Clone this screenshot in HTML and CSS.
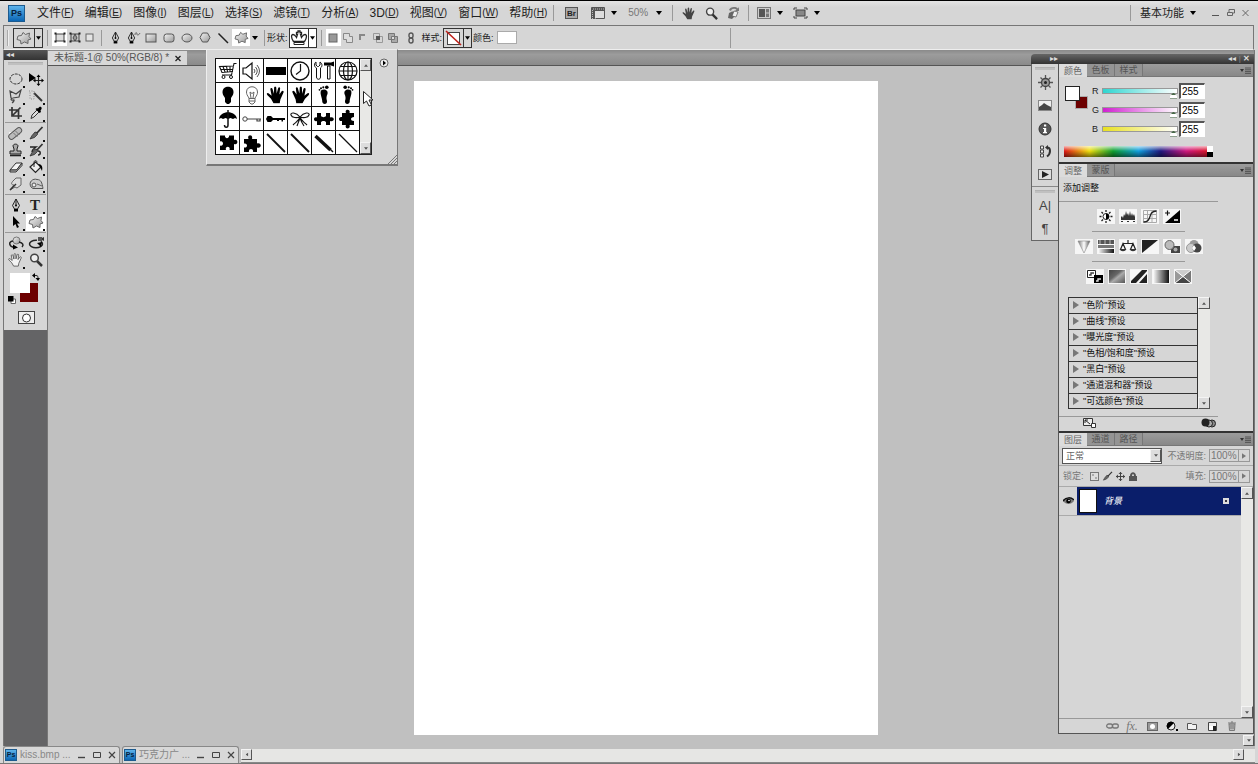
FILE: index.html
```html
<!DOCTYPE html>
<html lang="zh-CN">
<head>
<meta charset="utf-8">
<title>Photoshop</title>
<link rel="stylesheet" href="styles.css">
</head>
<body>
<svg class="defs" aria-hidden="true">
  <defs>
    <linearGradient id="gPs" x1="0" y1="0" x2="0" y2="1"><stop offset="0" stop-color="#5cb2ea"/><stop offset="1" stop-color="#0b66b4"/></linearGradient>
    <linearGradient id="gBtn" x1="0" y1="0" x2="1" y2="1"><stop offset="0" stop-color="#f4f4f4"/><stop offset="1" stop-color="#999"/></linearGradient>
    <linearGradient id="gH" x1="0" y1="0" x2="1" y2="0"><stop offset="0" stop-color="#fff"/><stop offset="1" stop-color="#111"/></linearGradient>
    <linearGradient id="gV" x1="0" y1="0" x2="1" y2="0"><stop offset="0" stop-color="#777"/><stop offset=".5" stop-color="#fff"/><stop offset="1" stop-color="#555"/></linearGradient>
    <linearGradient id="gD" x1="0" y1="0" x2="1" y2="1"><stop offset="0" stop-color="#444"/><stop offset=".4" stop-color="#666"/><stop offset=".55" stop-color="#aaa"/><stop offset="1" stop-color="#555"/></linearGradient>
  </defs>
  <symbol id="blob" viewBox="0 0 16 14"><path d="M5.500 4.500 7 1.500 9.500 3.500 13.500 2 13 5.500 15 8 12 9 12 12.500 8.500 11 5 13 4.500 9.500 1 8.500 2 5Z" fill="url(#gBtn)" stroke="#666" stroke-linejoin="round"/></symbol>
  <symbol id="down" viewBox="0 0 6 4"><path d="M0 0h6L3 4Z"/></symbol>
  <symbol id="pen" viewBox="0 0 12 14"><path d="M6 1v6M6 1 2.500 7.500 4.500 11h3L9.500 7.500Z" fill="#ccc" stroke="#222"/><circle cx="6" cy="7.500" r="1"/><path d="M4 11h4v2.500H4Z"/></symbol>
  <symbol id="hand" viewBox="0 0 16 14"><path d="M6 13.500 4 10 1 7C0 5.500 1.500 5 2.500 6L4.500 7.500 3.500 2.500C3.500 1 5 1 5.300 2.300L6.300 6 6.500 1C6.700-.2 8-.2 8.200 1L8.500 5.800 9.700 1.500C10 .3 11.500.6 11.300 1.900L10.700 6.500 12.500 4C13.400 3 14.500 3.800 14 5L11.500 10.500 11 13.500Z"/></symbol>
  <symbol id="zoom" viewBox="0 0 14 14"><path d="M8 8l5 5" stroke="#333" stroke-width="2.500"/><circle cx="5.500" cy="5" r="3.800" fill="#eee" stroke="#444" stroke-width="1.500"/></symbol>
  <symbol id="brush" viewBox="0 0 16 14"><path d="M14.500 1 8 8" stroke="#333" stroke-width="1.800"/><path d="M9 6.500 7 6 4 9.500 2 13 6.500 11.500 9.500 8.500Z" fill="#666" stroke="#222" stroke-width=".7"/></symbol>
  <symbol id="menuicon" viewBox="0 0 11 7"><path d="M0 2h4L2 5Z" fill="#333"/><path d="M5 1h6M5 2.800h6M5 4.600h6M5 6.400h6" stroke="#444" stroke-width=".8"/></symbol>
  <symbol id="puzzle" viewBox="0 0 20 20"><path d="M2 2.500h5C6.500 6 11.500 6 11 2.500h5v4.500c4.500-2 4.500 6 0 4V17h-4.500c1.500-4.500-5-4.500-3.500 0H2v-4.500c4 1.500 4-5.500 0-4Z"/></symbol>
  <symbol id="foot" viewBox="0 0 20 20"><path d="M7 5.500C10 3.500 14.500 5 13.500 9 12.500 11 12 13 13 16 13.500 19.500 9 20 8.300 17 8.500 13 5.500 9 7 5.500Z"/><circle cx="5.500" cy="4.800" r=".9"/><circle cx="7" cy="3.200" r="1"/><circle cx="9.300" cy="2.300" r="1.100"/><circle cx="12.800" cy="2.200" r="1.800"/></symbol>
  <symbol id="tri" viewBox="0 0 6 8"><path d="M0 0v8l6-4Z"/></symbol>
</svg>

<div class="app">
  <header class="menubar">
    <span class="logo">Ps</span>
    <nav class="menus">
      <button>文件<span>(<u>F</u>)</span></button><button>编辑<span>(<u>E</u>)</span></button><button>图像<span>(<u>I</u>)</span></button><button>图层<span>(<u>L</u>)</span></button><button>选择<span>(<u>S</u>)</span></button><button>滤镜<span>(<u>T</u>)</span></button><button>分析<span>(<u>A</u>)</span></button><button>3D<span>(<u>D</u>)</span></button><button>视图<span>(<u>V</u>)</span></button><button>窗口<span>(<u>W</u>)</span></button><button>帮助<span>(<u>H</u>)</span></button>
    </nav>
    <div class="appbar">
      <button class="w34" aria-label="Bridge"><svg width="13" height="12"><rect x=".5" y=".5" width="12" height="11" fill="#aaa" stroke="#555"/><text x="2" y="9" font-family="Liberation Sans" font-weight="bold" font-size="8" fill="#222">Br</text></svg></button>
      <button class="w30" aria-label="查看额外内容"><svg width="15" height="12"><path d="M1.500 11.500v-11h13v11H5.500" fill="#ddd" stroke="#555"/><path d="M1 1h13v3H5v8H1Z" fill="#555"/><path d="M3 2h11M2.500 3v9" stroke="#bbb" stroke-dasharray="1 1"/></svg><svg class="dn"><use href="#down"/></svg></button>
      <button class="zoomlevel">50% <svg class="dn"><use href="#down"/></svg></button>
      <i class="vsep"></i>
      <div class="views">
        <button class="w22" aria-label="抓手"><svg width="14" height="13" fill="#444"><use href="#hand"/></svg></button>
        <button class="w22" aria-label="缩放"><svg width="13" height="13"><use href="#zoom"/></svg></button>
        <button class="w22" aria-label="旋转视图"><svg width="14" height="14"><path d="M3 4C4 1 9 0 12 2.500L13 1v4H9l1.500-1.500C8 2 5.500 3 5 5Z" fill="#777"/><path d="M2 12 3 7 6 5.500 12 6 9 10 6 13Z" fill="#666"/><path d="M8 5l4 1-2 5-4-1Z" fill="#eee" stroke="#555" stroke-width=".7"/></svg></button>
      </div>
      <i class="vsep"></i>
      <div class="screens">
        <button class="w36" aria-label="排列文档"><svg width="14" height="12"><rect x=".5" y=".5" width="13" height="11" fill="#ccc" stroke="#777"/><path d="M2 2h6v8H2Z" fill="#555"/><path d="M9 2h3v3.500H9ZM9 6.500h3V10H9Z" fill="#777"/></svg><svg class="dn"><use href="#down"/></svg></button>
        <button class="w36" aria-label="屏幕模式"><svg width="15" height="12"><path d="M1 3V1h3M11 1h3v2M14 9v2h-3M4 11H1V9" fill="none" stroke="#444"/><rect x="3" y="3" width="9" height="6" fill="#888" stroke="#444"/></svg><svg class="dn"><use href="#down"/></svg></button>
      </div>
    </div>
    <div class="winbar">
      <button class="workspace">基本功能 <svg class="dn"><use href="#down"/></svg></button>
      <button aria-label="最小化"><svg width="8" height="8"><path d="M0 6.500h7" stroke="#555"/></svg></button>
      <button aria-label="还原"><svg width="8" height="8"><path d="M2 3V.5h5.500V4H6M.5 3.500h5v3h-5Z" fill="none" stroke="#666"/></svg></button>
      <button aria-label="关闭"><svg width="7" height="8"><path d="M.5 1l6 6M6.500 1l-6 6" stroke="#666"/></svg></button>
    </div>
  </header>

  <div class="options">
    <i class="grip"></i>
    <button class="combo preset" aria-label="工具预设"><svg width="16" height="14"><use href="#blob"/></svg><b><svg class="dn"><use href="#down"/></svg></b></button>
    <i class="vsep"></i>
    <div class="set s15">
      <button class="on" aria-label="形状图层"><svg width="12" height="11"><path d="M2 2h8v7H2Z" fill="#ddd" stroke="#444"/><path d="M.5.5h2v2h-2ZM9.500.5h2v2h-2ZM.5 8.500h2v2h-2ZM9.500 8.500h2v2h-2Z" fill="#222"/></svg></button>
      <button aria-label="路径"><svg width="12" height="11"><path d="M2 2h8v7H2Z" fill="#ccc" stroke="#444"/><path d="M.5.5h2v2h-2ZM9.500.5h2v2h-2ZM.5 8.500h2v2h-2ZM9.500 8.500h2v2h-2Z" fill="#222"/><path d="M6 2 4 6l2 3 2-3Z" fill="#999" stroke="#333" stroke-width=".8"/></svg></button>
      <button aria-label="填充像素"><svg width="9" height="9"><rect x="1" y="1" width="7" height="7" fill="#e4e4e4" stroke="#666"/></svg></button>
    </div>
    <i class="vsep"></i>
    <div class="set s18">
      <button aria-label="钢笔"><svg width="11" height="13"><use href="#pen"/></svg></button>
      <button aria-label="自由钢笔"><svg width="15" height="13"><use href="#pen" width="11" height="13"/><path d="M9 4c0-3 2-3 2-1s2 1 3-1" fill="none" stroke="#666"/></svg></button>
      <button aria-label="矩形"><svg width="12" height="10"><rect x="1" y="1" width="10" height="8" fill="url(#gBtn)" stroke="#555"/></svg></button>
      <button aria-label="圆角矩形"><svg width="12" height="10"><rect x="1" y="1" width="10" height="8" rx="2.500" fill="url(#gBtn)" stroke="#555"/></svg></button>
      <button aria-label="椭圆"><svg width="12" height="10"><ellipse cx="6" cy="5" rx="5" ry="4" fill="url(#gBtn)" stroke="#555"/></svg></button>
      <button aria-label="多边形"><svg width="12" height="11"><path d="M3.500 1h5L11 5.500 8.500 10h-5L1 5.500Z" fill="url(#gBtn)" stroke="#555"/></svg></button>
      <button aria-label="直线"><svg width="12" height="12"><path d="M1.500 1.500 11 11" stroke="#222" stroke-width="1.500"/></svg></button>
      <button class="on" aria-label="自定形状"><svg width="15" height="13"><use href="#blob"/></svg></button>
      <button class="w10" aria-label="形状选项"><svg class="dn"><use href="#down"/></svg></button>
    </div>
    <i class="vsep tight"></i>
    <span class="lbl" id="l-shape">形状:</span>
    <button class="combo white" aria-labelledby="l-shape"><svg width="18" height="17"><path d="M3.500 12.500C1 9 1 5.500 3 5.500S5.500 7 6.500 8.500L7.500 5.500 6.500 5.500V3.500h1.500V2h2v1.500h1.500v2H10.500l1 3C12.500 7 13 5.500 15 5.500S17 9 14.500 12.500Z" fill="#fff" stroke="#222" stroke-width="1.300"/><path d="M4 13.500h10v2H4Z" fill="#fff" stroke="#222"/></svg><b><svg class="dn"><use href="#down"/></svg></b></button>
    <i class="vsep"></i>
    <div class="set s15 dim">
      <button class="on" aria-label="新建形状"><svg width="10" height="10"><rect x="1" y="1" width="8" height="8" fill="#999" stroke="#666"/></svg></button>
      <button aria-label="添加"><svg width="10" height="10"><path d="M.5.5h6v3h3v6h-6v-3h-3Z" fill="#ddd" stroke="#888"/></svg></button>
      <button aria-label="减去"><svg width="10" height="10"><path d="M1 1h6v2H3v4H1Z" fill="#888"/></svg></button>
      <button aria-label="交叉"><svg width="10" height="10"><path d="M.5.5h6v6h-6ZM3.500 3.500h6v6h-6Z" fill="none" stroke="#999"/><path d="M3 3h4v4H3Z" fill="#555"/></svg></button>
      <button aria-label="重叠"><svg width="10" height="10"><path d="M.5.5h6v6h-6ZM3.500 3.500h6v6h-6Z" fill="#aaa" stroke="#777"/><path d="M4 4h2v2H4Z" fill="#ddd"/></svg></button>
    </div>
    <button class="chain" aria-label="链接"><svg width="6" height="12"><rect x="1" y="1" width="4" height="5" rx="2" fill="none" stroke="#555" stroke-width="1.400"/><rect x="1" y="6" width="4" height="5" rx="2" fill="none" stroke="#555" stroke-width="1.400"/></svg></button>
    <span class="lbl" id="l-style">样式:</span>
    <button class="combo" aria-labelledby="l-style"><svg width="19" height="18"><rect x="3.500" y="3.500" width="12" height="12" fill="#fff" stroke="#444"/><path d="M2 2l15 14" stroke="#c0201a" stroke-width="1.600"/></svg><b><svg class="dn"><use href="#down"/></svg></b></button>
    <span class="lbl" id="l-color">颜色:</span>
    <button class="colorbox" aria-labelledby="l-color"></button>
    <i class="vsep far"></i>
  </div>

  <main class="work">
    <aside class="toolbox">
      <div class="toolhead">◂◂</div>
      <div class="tools">
        <i class="hgrip"></i>
        <div class="group">
          <button class="sub" aria-label="椭圆选框"><svg><ellipse cx="8" cy="7" rx="6" ry="5" fill="none" stroke="#333" stroke-dasharray="3 1"/></svg></button>
          <button aria-label="移动"><svg><path d="M1 1v9l7-4Z"/><path d="M10.500 4v9M6 8.500h9" stroke="#222" stroke-width="1.200"/><path d="M10.500 2.500l2 2.500h-4ZM10.500 14l2-2.300h-4ZM16 8.500l-2.500-2v4ZM5 8.500l2.500-2v4Z"/></svg></button>
          <button class="sub" aria-label="套索"><svg><path d="M3 9 2 2l6 3 5-4-2 7-6 1c-3 0-2 3 0 2s1 2-1 3" fill="none" stroke="#444" stroke-width="1.200"/></svg></button>
          <button class="sub" aria-label="魔棒"><svg><path d="M6 4l8 8" stroke="#333" stroke-width="2"/><path d="M1 2h5v8H2V2" fill="none" stroke="#888" stroke-dasharray="1 1.500"/></svg></button>
          <button class="sub" aria-label="裁剪"><svg><path d="M4 1v9h10M1 4h9.500v9M12.500 1.500 5 9" fill="none" stroke="#333" stroke-width="1.700"/></svg></button>
          <button class="sub" aria-label="吸管"><svg><path d="M3 12.500 4 9l5-5 2 2-5 5Z" fill="#ddd" stroke="#333"/><path d="M7.500 3 9 2l1 .500C12-1 15.500 1.500 12.500 4.500L13 6l-1.500 1Z"/></svg></button>
        </div>
        <div class="group">
          <button class="sub" aria-label="修复画笔"><svg><path d="M1 6h5v7H1Z" fill="#f4f4f4"/><rect x="-1" y="5" width="15" height="5.500" rx="2.700" transform="rotate(-40 7 8) translate(1 0)" fill="#bbb" stroke="#555"/><path d="M5.500 7l4 4M7.500 5l4 4" stroke="#777"/></svg></button>
          <button class="sub" aria-label="画笔"><svg><use href="#brush" width="16" height="14"/></svg></button>
          <button class="sub" aria-label="图章"><svg><path d="M6 6 5 3C5 .5 10 .5 10 3L9 6v2h4v3H2V8h4Z" fill="#aaa" stroke="#222"/><path d="M2 12.500h11" stroke="#222" stroke-width="1.600"/></svg></button>
          <button class="sub" aria-label="历史画笔"><svg><use href="#brush" width="16" height="14"/><path d="M2 4h6C5 6 4 7 4 9M10 8c3 0 3 4 0 4" fill="none" stroke="#222" stroke-width="1.400"/></svg></button>
          <button class="sub" aria-label="橡皮擦"><svg><path d="M2 10 8 3h6L8.500 10Z" fill="#f4f4f4" stroke="#333"/><path d="M2 10v2h6l6-6.500V3L8.500 10Z" fill="#bbb" stroke="#333"/></svg></button>
          <button class="sub" aria-label="油漆桶"><svg><path d="M2 7 7.500 2 13 7 7.500 12.500Z" fill="#eee" stroke="#222" stroke-width="1.200"/><path d="M6 7V2.500C6 0 9 0 9 2.500" fill="none" stroke="#222"/><path d="M10 4c4 0 5 3 4 7l-2-4Z"/></svg></button>
          <button class="sub" aria-label="涂抹"><svg><path d="M2 13 6 8C3 8 3 6 5 4l3-3h5v7l-4 3-2-1Z" fill="#ddd" stroke="#666"/><path d="M2 13 8 7" stroke="#333" stroke-width="1.400"/></svg></button>
          <button class="sub" aria-label="海绵"><svg><path d="M3 10C0 5 5 1 9 2.500c4 0 5 3 6 9H5Z" fill="#ccc" stroke="#555"/><circle cx="6" cy="8" r="2" fill="#eee" stroke="#555"/><path d="M9 7l5 2" stroke="#666"/></svg></button>
        </div>
        <div class="group">
          <button class="sub" aria-label="钢笔"><svg><use href="#pen" x="2" y="0" width="12" height="14"/></svg></button>
          <button class="sub type" aria-label="文字">T</button>
          <button class="sub" aria-label="路径选择"><svg><path d="M5 1v10l2.500-2 1.500 4 2-1-2-3.500h3Z"/></svg></button>
          <button class="sub on" aria-label="自定形状"><svg><use href="#blob" width="16" height="14"/></svg></button>
        </div>
        <div class="group">
          <button class="sub" aria-label="3D旋转"><svg><circle cx="8.500" cy="4.500" r="3.500" fill="url(#gBtn)" stroke="#777"/><path d="M5 5C0 6 1 10 6 11.500M11 6c4 1 5 3 3 5" fill="none" stroke="#222" stroke-width="1.500"/><path d="M5 8.500l5 3-5 2Z"/></svg></button>
          <button class="sub" aria-label="3D环绕"><svg><ellipse cx="8" cy="8" rx="6.500" ry="3.800" fill="none" stroke="#222" stroke-width="1.500" stroke-dasharray="25 4"/><path d="M10 1h4v4h-4Z" fill="#555"/><path d="M14 2l2-1v4l-2-1Z" fill="#333"/><path d="M9 7l4 4 1-5Z"/></svg></button>
          <button class="sub" aria-label="抓手"><svg><use href="#hand" width="15" height="14" fill="#f3f3f3" stroke="#444" stroke-width=".8"/></svg></button>
          <button aria-label="缩放"><svg><use href="#zoom" x="1" width="14" height="14"/></svg></button>
        </div>
        <div class="swatches">
          <button class="bg" aria-label="背景色"></button>
          <button class="fg" aria-label="前景色"></button>
          <button class="swap" aria-label="切换颜色"><svg width="8" height="8"><path d="M1 2.500h3c2 0 2 1 2 3" fill="none" stroke="#222"/><path d="M3 0v5L0 2.500ZM3.500 5h4.500L6 8Z"/></svg></button>
          <button class="def" aria-label="默认颜色"><svg width="8" height="8"><path d="M3 3h4.500v4.500H3Z" fill="#fff" stroke="#666"/><path d="M0 0h5.500v5.500H0Z"/></svg></button>
        </div>
        <button class="mask" aria-label="快速蒙版"><svg width="11" height="10"><circle cx="5.500" cy="5" r="4" fill="#fff" stroke="#333"/></svg></button>
      </div>
    </aside>

    <section class="doc">
      <div class="tabbar"><div class="tab">未标题-1@ 50%(RGB/8) * <button aria-label="关闭文档"><svg width="6" height="7"><path d="M.5 1l5 5M5.500 1l-5 5" stroke="#222" stroke-width="1.300"/></svg></button></div></div>
      <div class="view">
        <div class="stage"><div class="paper"></div></div>
        <div class="vscroll"><button class="sb" aria-label="向下滚动"><svg class="sd"><use href="#down"/></svg></button></div>
      </div>
    </section>

    <aside class="dock">
      <div class="dockhead"><span class="d1">▸▸</span><span>◂◂ <em>|</em> <b>✕</b></span></div>
      <div class="dockbody">
        <div class="strip">
          <i class="hgrip"></i>
          <button aria-label="导航器"><svg width="15" height="15"><path d="M7.500 0v15M0 7.500h15M2.500 2.500l10 10M12.500 2.500l-10 10" stroke="#555" stroke-width="1.300"/><circle cx="7.500" cy="7.500" r="4" fill="#999" stroke="#444" stroke-width="1.300"/><circle cx="7.500" cy="7.500" r="1.500" fill="#222"/></svg></button>
          <button aria-label="直方图"><svg width="14" height="11"><rect x=".5" y=".5" width="13" height="10" fill="#eee" stroke="#888"/><path d="M1 10V7l3-2 2-2 3 2 4 2v3Z" fill="#444"/></svg></button>
          <button aria-label="信息"><svg width="14" height="14"><circle cx="7" cy="7" r="6" fill="#555" stroke="#333"/><path d="M6 2.500h2.200v2H6ZM5 6h3.200v4H9v1.200H5V10h1V7H5Z" fill="#fff"/></svg></button>
          <button aria-label="历史记录"><svg width="13" height="13"><path d="M1.500 1h3v3h-3ZM1.500 5h3v3h-3ZM1.500 9h3v3h-3Z" fill="#eee" stroke="#444"/><path d="M8 2.500c4 0 4 6 0 9" fill="none" stroke="#333" stroke-width="2"/><path d="M9 0v5L6 2.500Z" fill="#333"/></svg></button>
          <button aria-label="动作"><svg width="14" height="11"><rect x=".5" y=".5" width="13" height="10" fill="#ddd" stroke="#666"/><path d="M4 2v7l7-3.500Z" fill="#222"/></svg></button>
          <hr><i class="hgrip"></i>
          <button class="char" aria-label="字符">A|</button>
          <button class="char" aria-label="段落">¶</button>
        </div>
        <div class="panels">
          <section class="panel">
            <div class="ptabs"><button class="on">颜色</button><button>色板</button><button>样式</button><svg class="pm"><use href="#menuicon"/></svg></div>
            <div class="colorpanel">
              <div class="pair"><i class="r"></i><i class="w"></i></div>
              <div class="rgb">
                <label for="r">R</label><input type="range" id="r" class="cyan" max="255" value="255"><input type="text" value="255" aria-label="R 值">
                <label for="g">G</label><input type="range" id="g" class="mag" max="255" value="255"><input type="text" value="255" aria-label="G 值">
                <label for="b">B</label><input type="range" id="b" class="yel" max="255" value="255"><input type="text" value="255" aria-label="B 值">
              </div>
            </div>
            <div class="spectrum"><i></i></div>
          </section>

          <section class="panel">
            <div class="ptabs"><button class="on">调整</button><button>蒙版</button><svg class="pm"><use href="#menuicon"/></svg></div>
            <div class="adjust">
              <h2>添加调整</h2>
              <hr>
              <div class="arow">
                <button aria-label="亮度/对比度"><svg><circle cx="9" cy="7.500" r="3" fill="#fff" stroke="#222"/><path d="M9 4.500a3 3 0 0 1 0 6Z"/><path d="M9 1v2M9 12v2M2.500 7.500h2M13.500 7.500h2M4.500 3l1.500 1.500M12 10.500l1.500 1.500M13.500 3 12 4.500M6 10.500 4.500 12" stroke="#222" stroke-width="1.300"/></svg></button>
                <button aria-label="色阶"><svg><path d="M2 11V8l1-1 1 2 1-4 1 2 1-5 1 4 1-2 1 3 1-5 1 5 1-3 1 3 1-2 1 3v3Z" fill="#333"/><path d="M2 12.500h14" stroke="#333" stroke-dasharray="2 4"/></svg></button>
                <button aria-label="曲线"><svg><path d="M2.500 1.500h13v12h-13ZM6.500 1v12M11 1v12M2 5.500h13M2 9.500h13" fill="none" stroke="#aaa"/><path d="M2.500 13C12 13 6 2 15.500 2" fill="none" stroke="#222" stroke-width="1.300"/></svg></button>
                <button aria-label="曝光度"><svg><path d="M17 1v13H2Z"/><path d="M2 4h5M4.500 1.500v5" stroke="#111" stroke-width="1.200"/><path d="M11 11h4" stroke="#fff" stroke-width="1.500"/></svg></button>
              </div>
              <hr class="short">
              <div class="arow">
                <button aria-label="自然饱和度"><svg><path d="M3 2h12L9 14Z" fill="url(#gV)" stroke="#888" stroke-width=".6"/></svg></button>
                <button aria-label="色相/饱和度"><svg><path d="M1 1h16v4H1Z" fill="#555"/><path d="M3 1v4M8 1v4M13 1v4" stroke="#888" stroke-width="2"/><path d="M1 6h16v3H1Z" fill="#777"/><path d="M1 10h16v4H1Z" fill="url(#gH)"/></svg></button>
                <button aria-label="色彩平衡"><svg><path d="M9 1v4M4 4.500h10M4 4.500l-2.500 6h5ZM14 4.500l-2.500 6h5Z" fill="none" stroke="#222" stroke-width="1.200"/><path d="M1 10h6c0 3-6 3-6 0ZM11 10h6c0 3-6 3-6 0Z" fill="#333"/></svg></button>
                <button aria-label="黑白"><svg><path d="M1 1h16L1 14Z" fill="#222"/></svg></button>
                <button aria-label="照片滤镜"><svg><path d="M8 7h9v7H8Z" fill="#444"/><circle cx="12.500" cy="10.500" r="2" fill="#aaa"/><circle cx="6.500" cy="6" r="4.500" fill="#bbb" stroke="#666"/></svg></button>
                <button aria-label="通道混合器"><svg><circle cx="9" cy="5.500" r="4.500" fill="#999"/><circle cx="6" cy="9" r="4.500" fill="#ccc" stroke="#999"/><circle cx="12" cy="9" r="4.500" fill="#444"/><path d="M9 6l2 3-2 3-2-3Z" fill="#fff"/></svg></button>
              </div>
              <hr class="short">
              <div class="arow">
                <button aria-label="反相"><svg><path d="M1.500 1.500h8v7h-8Z" fill="#fff" stroke="#222"/><path d="M8 6h9v8H8Z"/><path d="M3 6h2V4h3" fill="none" stroke="#444" stroke-width="1.400"/><path d="M10 12h2v-2h3" fill="none" stroke="#ddd" stroke-width="1.400"/></svg></button>
                <button aria-label="色调分离"><svg><path d="M1 1h16v13H1Z" fill="url(#gD)"/></svg></button>
                <button aria-label="阈值"><svg><path d="M1 14V12L12 1h5v1L6 14ZM9 14 17 5v9Z" fill="#222"/></svg></button>
                <button aria-label="渐变映射"><svg><path d="M1 1h16v13H1Z" fill="url(#gH)"/></svg></button>
                <button aria-label="可选颜色"><svg><path d="M1 1h16v13H1Z" fill="#ccc"/><path d="M1 1l8 6.500L1 14Z" fill="#999"/><path d="M17 1 9 7.500 17 14Z" fill="#777"/><path d="M1 14l8-6.500 8 6.500Z" fill="#444"/><path d="M1 1l16 13M17 1 1 14" stroke="#fff"/></svg></button>
              </div>
              <div class="presets">
                <ul>
                  <li><button><svg><use href="#tri"/></svg>"色阶"预设</button></li>
                  <li><button><svg><use href="#tri"/></svg>"曲线"预设</button></li>
                  <li><button><svg><use href="#tri"/></svg>"曝光度"预设</button></li>
                  <li><button><svg><use href="#tri"/></svg>"色相/饱和度"预设</button></li>
                  <li><button><svg><use href="#tri"/></svg>"黑白"预设</button></li>
                  <li><button><svg><use href="#tri"/></svg>"通道混和器"预设</button></li>
                  <li><button><svg><use href="#tri"/></svg>"可选颜色"预设</button></li>
                </ul>
                <div class="scroll"><button class="sb" aria-label="向上"><svg class="sd up"><use href="#down"/></svg></button><button class="sb" aria-label="向下"><svg class="sd"><use href="#down"/></svg></button></div>
              </div>
              <hr>
              <div class="afoot">
                <button aria-label="展开视图"><svg width="13" height="10"><path d="M.5.500h9v7h-9Z" fill="#eee" stroke="#333"/><path d="M2 2l5 4M2 2h3M2 2v3" stroke="#222"/><path d="M8.500 5.500h4v4h-4Z" fill="#fff" stroke="#333"/></svg></button>
                <button aria-label="剪切到图层"><svg width="15" height="10"><circle cx="11" cy="5.500" r="3.500" fill="#888" stroke="#222"/><circle cx="8" cy="5.500" r="3.500" fill="#aaa" stroke="#222"/><circle cx="4.500" cy="4.500" r="4" fill="#222"/></svg></button>
              </div>
            </div>
          </section>

          <section class="panel layers">
            <div class="ptabs"><button class="on">图层</button><button>通道</button><button>路径</button><svg class="pm"><use href="#menuicon"/></svg></div>
            <div class="lrow">
              <div class="selwrap"><select aria-label="混合模式"><option>正常</option></select><span class="sb"><svg class="sd"><use href="#down"/></svg></span></div>
              <label for="op">不透明度:</label><div class="num"><input id="op" type="text" value="100%"><button aria-label="调整不透明度"><svg width="4" height="6"><use href="#tri"/></svg></button></div>
            </div>
            <div class="lrow second">
              <span class="lock">锁定:</span>
              <button class="w13" aria-label="锁定透明"><svg width="9" height="9"><rect x=".5" y=".5" width="8" height="8" fill="#ddd" stroke="#777"/><path d="M2 2h2v2H2ZM5 5h2v2H5Z" fill="#aaa"/></svg></button>
              <button class="w13" aria-label="锁定像素"><svg width="11" height="10"><use href="#brush"/></svg></button>
              <button class="w13" aria-label="锁定位置"><svg width="9" height="9"><path d="M4.500 0v9M0 4.500h9" stroke="#444"/><path d="M4.500 0l2 2h-4ZM4.500 9l2-2h-4ZM0 4.500l2-2v4ZM9 4.500l-2-2v4Z" fill="#444"/></svg></button>
              <button class="w13" aria-label="锁定全部"><svg width="8" height="9"><path d="M0 9V4h1C1-1 7-1 7 4h1v5Z" fill="#555"/><path d="M3 4V3c0-1 2-1 2 0v1Z" fill="#ccc"/></svg></button>
              <label class="push" for="fill">填充:</label><div class="num"><input id="fill" type="text" value="100%"><button aria-label="调整填充"><svg width="4" height="6"><use href="#tri"/></svg></button></div>
            </div>
            <div class="llist">
              <div class="items">
                <div class="layer"><button class="eye" aria-label="可见性"><svg width="11" height="8"><path d="M0 4C3 0 8 0 11 4 8 8 3 8 0 4Z" fill="#777"/><path d="M0 4C3 0 8 0 11 3" fill="none" stroke="#111" stroke-width="1.500"/><circle cx="5.500" cy="4" r="2.300"/><circle cx="6" cy="3.500" r=".8" fill="#fff"/></svg></button><div class="name"><i class="thumb"></i><span>背景</span><svg width="6" height="6"><path d="M0 0h6v6H0Z" fill="#ddd"/><path d="M2 2h2v2H2Z" fill="#334"/></svg></div></div>
              </div>
              <div class="scroll"><button class="sb" aria-label="向上"><svg class="sd up"><use href="#down"/></svg></button><button class="sb" aria-label="向下"><svg class="sd"><use href="#down"/></svg></button></div>
            </div>
            <div class="lfoot">
              <button aria-label="链接图层"><svg width="13" height="6"><rect x=".7" y="1" width="6" height="4" rx="2" fill="none" stroke="#777" stroke-width="1.300"/><rect x="6.300" y="1" width="6" height="4" rx="2" fill="none" stroke="#777" stroke-width="1.300"/></svg></button>
              <button class="fx" aria-label="图层样式">fx.</button>
              <button aria-label="添加蒙版"><svg width="11" height="9"><rect x=".5" y=".5" width="10" height="8" fill="#999" stroke="#666"/><circle cx="5.500" cy="4.500" r="2.500" fill="#fff"/></svg></button>
              <button aria-label="调整图层"><svg width="12" height="10"><circle cx="5" cy="5" r="4" fill="#eee" stroke="#222"/><path d="M2 8A4 4 0 0 1 8 2Z"/><path d="M10 8h2v2h-2Z"/></svg></button>
              <button aria-label="新建组"><svg width="10" height="8"><path d="M.5 1.500h4l1 1h4v5h-9Z" fill="#f2f2f2" stroke="#555"/></svg></button>
              <button aria-label="新建图层"><svg width="9" height="9"><path d="M.5.500h8v8h-8Z" fill="#eee" stroke="#444"/><path d="M1 4h4v4H1Z" fill="#fff"/><path d="M5 4h3v5H5Z" fill="#222"/></svg></button>
              <button aria-label="删除图层"><svg width="8" height="10"><path d="M1 3h6l-.5 6.500h-5ZM0 2h8M3 1h2" fill="#bbb" stroke="#777"/><path d="M3 4v4M5 4v4" stroke="#777"/></svg></button>
            </div>
          </section>
        </div>
      </div>
    </aside>

    <div class="picker">
      <div class="shapes">
        <button aria-label="购物车"><svg viewBox="0 0 20 20"><path d="M18.500 2.500H16L13.500 14H4M16 5 1.500 5.500 4 11.500l11-1M5 5.500l2 5.500M8.500 5.500l1 5M12 5v5.500M2.500 8.500H15" fill="none" stroke="#111" stroke-width="1.100"/><circle cx="5.500" cy="16" r="1.500" fill="#fff" stroke="#111"/><circle cx="13" cy="16" r="1.500" fill="#fff" stroke="#111"/></svg></button>
        <button aria-label="扬声器"><svg viewBox="0 0 20 20"><path d="M1 7h3l6-5v16l-6-5H1Z" fill="#fff" stroke="#111" stroke-width="1.200"/><path d="M12 8q2 2 0 4M13.500 6q3.500 4 0 8M15 4q5 6 0 12" fill="none" stroke="#555"/></svg></button>
        <button aria-label="矩形"><svg viewBox="0 0 20 20"><path d="M0 6h20v8H0Z"/></svg></button>
        <button aria-label="时钟"><svg viewBox="0 0 20 20"><circle cx="10" cy="10" r="9" fill="#fff" stroke="#111" stroke-width="1.400"/><path d="M10.500 3v7L6 13.500" fill="none" stroke="#111" stroke-width="1.200"/></svg></button>
        <button aria-label="工具"><svg viewBox="0 0 20 20"><path d="M2 1v3l1.500 1.500h1L6 4V1c3 2 2 5 .5 6v9c0 3-4 3-4 0V7C0 6 0 2 2 1Z" fill="#fff" stroke="#111"/><path d="M10 1.500h7l3-1v5l-3-1h-7Z"/><path d="M13.500 5h2.500v13h-2.500Z" fill="#fff" stroke="#111"/></svg></button>
        <button aria-label="地球"><svg viewBox="0 0 20 20"><g fill="none" stroke="#111" stroke-width="1.200"><circle cx="10" cy="10" r="9"/><ellipse cx="10" cy="10" rx="4.500" ry="9"/><path d="M10 1v18M1 10h18M2.500 5.500h15M2.500 14.500h15"/></g></svg></button>
        <button aria-label="实心灯泡"><svg viewBox="0 0 20 20"><path d="M7 13C5 10 4.500 9 4.500 7c0-7 11-7 11 0 0 2-.500 3-2.500 6Z"/><path d="M7 13h6v4l-2 2H9l-2-2Z"/></svg></button>
        <button aria-label="灯泡"><svg viewBox="0 0 20 20"><path d="M7 13C5 10 4.500 9 4.500 7c0-7 11-7 11 0 0 2-.500 3-2.500 6v4l-2 2H9l-2-2ZM7 13.500h6M7 16h6M9 13 8 7l2 1.500L12 7l-1 6" fill="none" stroke="#666"/></svg></button>
        <button aria-label="左手"><svg viewBox="0 0 16 14"><use href="#hand"/></svg></button>
        <button aria-label="右手"><svg viewBox="0 0 16 14"><use href="#hand" transform="matrix(-1 0 0 1 16 0)"/></svg></button>
        <button aria-label="左脚"><svg viewBox="0 0 20 20"><use href="#foot"/></svg></button>
        <button aria-label="右脚"><svg viewBox="0 0 20 20"><use href="#foot" transform="matrix(-1 0 0 1 20 0)"/></svg></button>
        <button aria-label="雨伞"><svg viewBox="0 0 20 20"><path d="M1 10C2 1 18 1 19 10l-2-1-2 1-2.500-1-2.500 1-2.500-1L5 10 3 9Z"/><path d="M10 1v15c0 3-3.500 3-3.500 0" fill="none" stroke="#111" stroke-width="1.500"/></svg></button>
        <button aria-label="空心钥匙"><svg viewBox="0 0 20 20"><circle cx="3" cy="10" r="2.200" fill="none" stroke="#444"/><path d="M5 10h14M15 10v2h3v-2" fill="none" stroke="#444" stroke-width="1.200"/></svg></button>
        <button aria-label="钥匙"><svg viewBox="0 0 20 20"><path d="M0 10 1.500 7h3.500l2 2h12v2h-2v1.500h-1.500V11H13v1h-2v-1H7l-2 2H1.500Z"/></svg></button>
        <button aria-label="蝴蝶结"><svg viewBox="0 0 20 20"><path d="M10 8C6 3 0 3 1 6s6 3 9 2c4-5 10-5 9-2s-6 3-9 2C9 12 6 13 3 16M10 8c1 4 4 5 7 8M10 9c-1 3-2 5-3 8M10 9c1 3 2 5 4 8" fill="none" stroke="#111" stroke-width="1.100"/></svg></button>
        <button aria-label="拼图 1"><svg viewBox="0 0 20 20"><path d="M3 4h4v3c1 1.500 4 1.500 5 0V4h4v4.500c5-1.500 5 5 0 3.500V16h-4v-3c-1-1.500-4-1.500-5 0v3H3v-4c-4 1.500-4-5 0-3.500Z"/></svg></button>
        <button aria-label="拼图 2"><svg viewBox="0 0 20 20"><path d="M4 4h4c-2-4.500 5-4.500 3.500 0H16v4c-4 0-4 4 0 4v4h-4.500c1.500 4.500-5.500 4.500-3.500 0H4v-4c-4 1-4-5 0-4Z"/></svg></button>
        <button aria-label="拼图 3"><svg viewBox="0 0 20 20"><use href="#puzzle"/></svg></button>
        <button aria-label="拼图 4"><svg viewBox="0 0 20 20"><path d="M2 6h4.500c-2-5 5-5 3.500 0H15v4.500c5-1.500 5 5.500 0 4V19h-4c1-4-5-4-4 0H2v-4.500c4 1 4-5 0-4Z"/></svg></button>
        <button aria-label="线条 1"><svg viewBox="0 0 20 20"><path d="M1 1l18 18" stroke="#111" stroke-width="1.800"/></svg></button>
        <button aria-label="线条 2"><svg viewBox="0 0 20 20"><path d="M1 1l18 18" stroke="#111" stroke-width="2"/></svg></button>
        <button aria-label="线条 3"><svg viewBox="0 0 20 20"><path d="M1.500 3l15 14" stroke="#111" stroke-width="3.500"/><path d="M15 15l4 4" stroke="#111" stroke-width="1.500"/></svg></button>
        <button aria-label="线条 4"><svg viewBox="0 0 20 20"><path d="M1 1l18 18" stroke="#111" stroke-width="1.200"/></svg></button>
      </div>
      <div class="scroll"><button class="sb" aria-label="向上"><svg class="sd up"><use href="#down"/></svg></button><button class="sb" aria-label="向下"><svg class="sd"><use href="#down"/></svg></button></div>
      <button class="flyout" aria-label="选择器菜单"><svg width="10" height="10"><circle cx="5" cy="5" r="4" fill="#eee" stroke="#666"/><path d="M4 2.500v5L7 5Z"/></svg></button>
      <svg class="corner" width="9" height="9"><path d="M0 9 9 0M3 9 9 3M6 9l3-3" stroke="#777"/></svg>
      <svg class="cursor" width="11" height="16"><path d="M.500.500v12l3-2.500 2.500 5 2.500-1-2.500-5h4Z" fill="#fff" stroke="#222"/></svg>
    </div>
  </main>

  <footer class="bottom">
    <div class="mini"><span class="logo small">Ps</span><span class="title">kiss.bmp ...</span><button aria-label="最小化"><svg width="8" height="8"><path d="M0 6.500h7" stroke="#444" stroke-width="1.400"/></svg></button><button aria-label="最大化"><svg width="8" height="8"><path d="M.5 1.500h7v5h-7Z" fill="none" stroke="#444"/></svg></button><button aria-label="关闭"><svg width="8" height="8"><path d="M1 1l6 6M7 1 1 7" stroke="#444" stroke-width="1.200"/></svg></button></div>
    <div class="mini"><span class="logo small">Ps</span><span class="title">巧克力广 ...</span><button aria-label="最小化"><svg width="8" height="8"><path d="M0 6.500h7" stroke="#444" stroke-width="1.400"/></svg></button><button aria-label="最大化"><svg width="8" height="8"><path d="M.5 1.500h7v5h-7Z" fill="none" stroke="#444"/></svg></button><button aria-label="关闭"><svg width="8" height="8"><path d="M1 1l6 6M7 1 1 7" stroke="#444" stroke-width="1.200"/></svg></button></div>
    <div class="hscroll"><button class="sb" aria-label="向左"><svg class="sd left"><use href="#down"/></svg></button><button class="sb" aria-label="向右"><svg class="sd right"><use href="#down"/></svg></button></div>
  </footer>
</div>
</body>
</html>
```

FILE: styles.css
```css
* { box-sizing: border-box; }
body {
  margin: 0;
  background: #d6d6d6;
  color: #222;
  font: 9px/12px "Liberation Sans", "Noto Sans CJK SC", sans-serif;
}
button {
  margin: 0; padding: 0; border: 0; background: none;
  color: inherit; font: inherit; white-space: nowrap;
  display: flex; align-items: center; justify-content: center; flex: none;
}
svg { display: block; flex: none; }
i { display: block; }
.defs { position: absolute; width: 0; height: 0; }
.dn { width: 6px; height: 4px; }

.app {
  display: flex; flex-direction: column; height: 100vh;
  border-top: 1px solid #000; border-bottom: 1px solid #777;
}
.vsep { width: 1px; height: 16px; background: #999; flex: none; }

/* menu bar */
.menubar { display: flex; align-items: center; height: 24px; padding-left: 8px; background: linear-gradient(#e4e4e4, #d6d6d6 6px); }
.logo {
  flex: none; width: 17px; height: 17px; text-align: center;
  font-weight: bold; font-size: 9px; line-height: 15px; color: #06213c;
  background: linear-gradient(#5cb2ea, #0b66b4); border: 1px solid #1c5a8e;
}
.logo.small { width: 12px; height: 12px; font-size: 7px; line-height: 10px; }
.menus { display: flex; gap: 11px; margin-left: 12px; font-size: 12px; line-height: 16px; }
.menus span { font-size: 10px; }
.appbar { display: flex; align-items: center; margin-left: 6px; border-left: 1px solid #999; height: 16px; font-size: 10px; }
.w36 { width: 36px; gap: 6px; }
.w34 { width: 34px; }
.w30 { width: 30px; gap: 6px; }
.w22 { width: 22px; }
.zoomlevel { width: 54px; gap: 8px; color: #777; }
.views { display: flex; padding: 0 4px 0 5px; }
.screens { display: flex; padding-left: 3px; }
.winbar { display: flex; align-items: center; gap: 7px; margin-left: auto; padding-right: 9px; border-left: 1px solid #999; height: 16px; }
.workspace { font-size: 11px; gap: 6px; padding: 0 9px; }

/* options bar */
.options {
  display: flex; align-items: center; height: 25px; margin: 0 4px 0 3px;
  border: 1px solid #777; border-bottom-color: #eee;
}
.grip { width: 2px; height: 16px; border-left: 1px solid #aaa; border-right: 1px solid #eee; margin: 0 4px 0 3px; }
.combo { height: 20px; border: 1px solid #333; }
.combo b { display: flex; align-items: center; height: 18px; padding: 0 1px; border-left: 1px solid #333; }
.combo .dn { width: 5px; }
.combo.white { background: #fff; }
.preset > svg { margin: 0 2px; }
.options .vsep { margin: 0 4px; }
.options .vsep.tight { margin-right: 1px; }
.options .vsep.far { margin-left: 213px; height: 20px; }
.set { display: flex; }
.set button { height: 17px; }
.s15 button { width: 15px; }
.s18 button { width: 18px; }
.s18 .w10 { width: 10px; }
.set .on { background: #fff; }
.lbl { margin: 0 1px; }
.chain { width: 20px; }
.colorbox { width: 20px; height: 13px; margin-left: 2px; background: #fff; border: 1px solid #aaa; }

/* work area */
.work {
  position: relative; flex: 1; min-height: 0; margin: 0 3px;
  display: grid; grid-template-columns: 45px 1fr; grid-template-rows: minmax(0, 1fr);
  border-right: 1px solid #777;
}
.toolbox { grid-area: 1 / 1; background: #646466; border: solid #777; border-width: 0 1px; }
.toolhead { height: 10px; background: linear-gradient(#555, #333); color: #ddd; font-size: 8px; line-height: 9px; padding-left: 2px; }
.tools { background: #d6d6d6; padding: 2px 1px 6px; display: flow-root; }
.hgrip { height: 3px; margin: 0 3px; background: #c0c0c0; border-top: 1px solid #b2b2b2; }
.group { display: grid; grid-template-columns: 20px 20px; grid-auto-rows: 17px; padding: 2px 0 1px 1px; border-top: 1px solid #999; }
.hgrip + .group { border-top: 0; padding: 6px 0 0 1px; }
.group button { position: relative; justify-content: flex-start; padding-left: 2px; }
.group svg { width: 17px; height: 15px; }
.group .sub::after { content: ""; position: absolute; right: 1px; bottom: 0; border: 1px solid #111; }
.group .on { background: #fff; }
.group .type { font: bold 15px/17px "Liberation Serif", serif; padding-left: 4px; }
.swatches { position: relative; height: 35px; margin-top: 3px; }
.swatches button { position: absolute; }
.fg { left: 5px; top: 0; width: 20px; height: 20px; background: #fff; }
.bg { left: 15px; top: 10px; width: 18px; height: 19px; background: #6c0000; }
.swap { left: 27px; top: 0; }
.def { left: 3px; top: 23px; }
.mask { width: 17px; height: 13px; margin: 3px 0 0 13px; background: #eee; border: 1px solid #444; }

/* document */
.doc { grid-area: 1 / 2; display: flex; flex-direction: column; min-width: 0; }
.tabbar { height: 16px; padding-top: 1px; background: linear-gradient(#8a8a8a, #9c9c9c 30%, #8a8a8a); border-bottom: 1px solid #555; }
.tab { display: flex; align-items: center; width: fit-content; height: 14px; padding: 0 6px; background: #d8d8d8; font-size: 10px; color: #555; white-space: pre; }
.tab button { margin-left: 3px; }
.view { flex: 1; display: flex; min-height: 0; background: #c0c0c0; }
.stage { flex: 1; display: flex; justify-content: center; padding: 15px 0 11px; min-height: 0; }
.paper { height: 100%; aspect-ratio: 464 / 654; background: #fff; }
.vscroll { width: 11px; display: flex; align-items: flex-end; }
.sb { width: 11px; height: 11px; background: #ddd; border: 1px solid #f4f4f4; border-right-color: #555; border-bottom-color: #555; display: flex; align-items: center; justify-content: center; flex: none; }
.sd { width: 4px; height: 3px; fill: #555; }
.up { transform: rotate(180deg); }
.left { transform: rotate(90deg); }
.right { transform: rotate(-90deg); }
.scroll { width: 12px; display: flex; flex-direction: column; justify-content: space-between; background: #e8e8e6; }
.scroll .sb { width: 12px; height: 12px; }

/* shape picker */
.picker {
  position: absolute; left: 203px; top: -1px; display: flex; align-items: flex-start;
  padding: 8px 8px 9px; background: #d6d6d6;
  border: 1px solid #eee; border-right-color: #777; border-bottom: 2px solid #777;
}
.shapes { display: grid; grid-template-columns: repeat(6, 24px); grid-auto-rows: 24px; border: solid #111; border-width: 1px 0 0 1px; background: #fff; }
.shapes button { border: solid #111; border-width: 0 1px 1px 0; }
.shapes svg { width: 20px; height: 20px; }
.picker .scroll { align-self: stretch; border: 1px solid #222; border-left: 0; }
.picker .scroll .sb { width: 11px; }
.flyout { margin-left: 7px; }
.corner { position: absolute; right: 0; bottom: 0; }
.cursor { position: absolute; left: 156px; top: 41px; }

/* dock */
.dock { grid-area: 1 / 2; justify-self: end; display: flex; flex-direction: column; width: 223px; margin: 4px 0 12px; position: relative; }
.dockhead { display: flex; justify-content: space-between; height: 10px; padding: 0 4px 0 19px; background: linear-gradient(#666, #333); color: #ddd; font-size: 8px; line-height: 9px; border-radius: 4px 0 0 0; }
.dockhead em { color: #888; font-style: normal; }
.dockbody { flex: 1; display: flex; min-height: 0; align-items: flex-start; }
.strip { width: 27px; background: #d6d6d6; border: solid #666; border-width: 0 0 1px 1px; padding-top: 3px; }
.strip button { width: 26px; height: 23px; }
.strip .hgrip + button { margin-top: 1px; }
.strip hr { margin: 0 0 3px; border: 0; border-top: 1px solid #888; }
.strip .char { font-size: 13px; color: #444; }
.panels { flex: 1; align-self: stretch; display: flex; flex-direction: column; background: #d6d6d6; border: 1px solid #555; border-width: 0 1px 1px; }
.panel + .panel { border-top: 2px solid #333; }
.ptabs { display: flex; height: 13px; background: linear-gradient(#9c9c9c, #888); border-bottom: 1px solid #777; }
.ptabs button { width: 28px; color: #555; background: #949494; border-right: 1px solid #777; }
.ptabs .on { background: #dcdcdc; color: #666; border: 0; height: 13px; }
.pm { width: 11px; height: 7px; margin: 3px 2px 0 auto; }
.colorpanel { display: flex; padding: 6px 0 0 6px; }
.pair { position: relative; width: 27px; }
.pair i { position: absolute; }
.pair .w { left: 0; top: 3px; width: 15px; height: 15px; background: #fff; border: 1px solid #222; }
.pair .r { left: 10px; top: 13px; width: 13px; height: 13px; background: #6c0000; border: 1px solid #aaa; }
.rgb { display: grid; grid-template-columns: 10px 77px 26px; grid-auto-rows: 19px; align-items: start; line-height: 16px; }
.rgb input[type=text] { width: 26px; height: 16px; margin: 0; padding: 0 1px; border: 1px solid #fff; border-top: 2px solid #555; border-left: 2px solid #555; font: 10px/12px "Liberation Sans", sans-serif; }
input[type=range] { appearance: none; width: 76px; height: 15px; margin: 0; background: none; }
input[type=range]::-webkit-slider-runnable-track { height: 6px; border: 1px solid #999; }
input[type=range]::-webkit-slider-thumb { appearance: none; width: 7px; height: 6px; margin-top: 4px; background: linear-gradient(#486a48 40%, #fff 40% 80%, #486a48 80%); clip-path: polygon(50% 0, 100% 60%, 100% 100%, 0 100%, 0 60%); }
.cyan::-webkit-slider-runnable-track { background: linear-gradient(90deg, #2fd5d0, #fff); }
.mag::-webkit-slider-runnable-track { background: linear-gradient(90deg, #d020d0, #fff); }
.yel::-webkit-slider-runnable-track { background: linear-gradient(90deg, #e8e020, #fff); }
.spectrum {
  display: flex; justify-content: flex-end; height: 11px; margin: 6px 40px 5px 5px;
  background: linear-gradient(rgba(255,255,255,.7), transparent 45%, rgba(0,0,0,.5)), linear-gradient(90deg, #e01818, #f0e010 17%, #10a030 33%, #10a0e0 50%, #201880 65%, #d01880 82%, #e01818);
}
.spectrum i { width: 6px; background: linear-gradient(#fff 50%, #000 50%); }

.adjust { padding: 5px 35px 1px 0; }
.adjust h2 { margin: 0 0 7px 4px; font: inherit; color: #111; }
.adjust hr { margin: 0; border: 0; border-top: 1px solid #999; }
.adjust hr.short { margin: 0 33px; }
.arow { display: flex; justify-content: center; gap: 4px; padding: 7px 0; }
.arow button { width: 18px; height: 15px; background: #f6f6f6; }
.arow svg { width: 18px; height: 15px; }
.presets { display: flex; margin: 6px 8px 7px 9px; }
.presets ul { flex: 1; list-style: none; margin: 0; padding: 0; border: solid #333; border-width: 1px 1px 0; }
.presets li { border-bottom: 1px solid #333; height: 16px; padding-left: 4px; color: #111; }
.presets li:last-child { height: 15px; }
.presets li button { height: 14px; gap: 4px; }
.presets li svg { width: 6px; height: 8px; fill: #777; }
.afoot { display: flex; justify-content: space-between; padding: 1px 2px 2px 24px; }

.layers { flex: 1; display: flex; flex-direction: column; min-height: 0; color: #777; }
.lrow { display: flex; align-items: center; height: 20px; padding: 0 3px; border-bottom: 1px solid #aaa; }
.lrow.second { height: 21px; padding-left: 4px; }
.selwrap { flex: 1; display: flex; align-items: center; height: 16px; margin-right: 5px; background: #fff; border: 1px solid #555; }
.selwrap select { flex: 1; min-width: 0; appearance: none; border: 0; background: none; padding: 0 3px; color: #666; font: 9px/14px "Liberation Sans", "Noto Sans CJK SC", sans-serif; }
.selwrap .sb { height: 13px; }
.num { display: flex; height: 13px; margin-left: 3px; border: 1px solid #999; }
.num input { width: 28px; border: 0; padding: 0 1px; background: none; color: #777; font: 10px/11px "Liberation Sans", sans-serif; }
.num button { width: 11px; border-left: 1px solid #999; }
.num svg { fill: #777; }
.lock { margin-right: 4px; }
.w13 { width: 13px; }
.push { margin-left: auto; }
.llist { flex: 1; display: flex; min-height: 0; border-bottom: 1px solid #999; }
.items { flex: 1; }
.layer { display: flex; height: 29px; border-bottom: 1px solid #aaa; }
.eye { width: 18px; }
.name { flex: 1; display: flex; align-items: center; padding: 0 12px 0 2px; background: #0a1e6a; color: #fff; font-style: italic; }
.name span { flex: 1; margin-left: 7px; }
.thumb { width: 18px; height: 24px; background: #fff; border: 1px solid #111; }
.lfoot { display: flex; justify-content: flex-end; height: 14px; padding-right: 11px; }
.lfoot button { width: 20px; }
.fx { font: italic 12px/12px "Liberation Serif", serif; }

/* bottom bar */
.bottom { display: flex; align-items: flex-end; height: 17px; margin: 0 3px; background: #c0c0c0; }
.mini { display: flex; align-items: center; gap: 7px; width: 117px; height: 17px; padding: 0 8px 0 1px; margin-right: 2px; background: #d8d8d8; border: 1px solid #888; border-bottom: 0; border-radius: 3px 3px 0 0; color: #888; font-size: 10px; }
.title { flex: 1; margin-left: -4px; white-space: nowrap; }
.hscroll { flex: 1; display: flex; justify-content: space-between; height: 14px; padding: 0 11px 2px 0; background: #e6e6e4; border-bottom: 1px solid #888; }
```
